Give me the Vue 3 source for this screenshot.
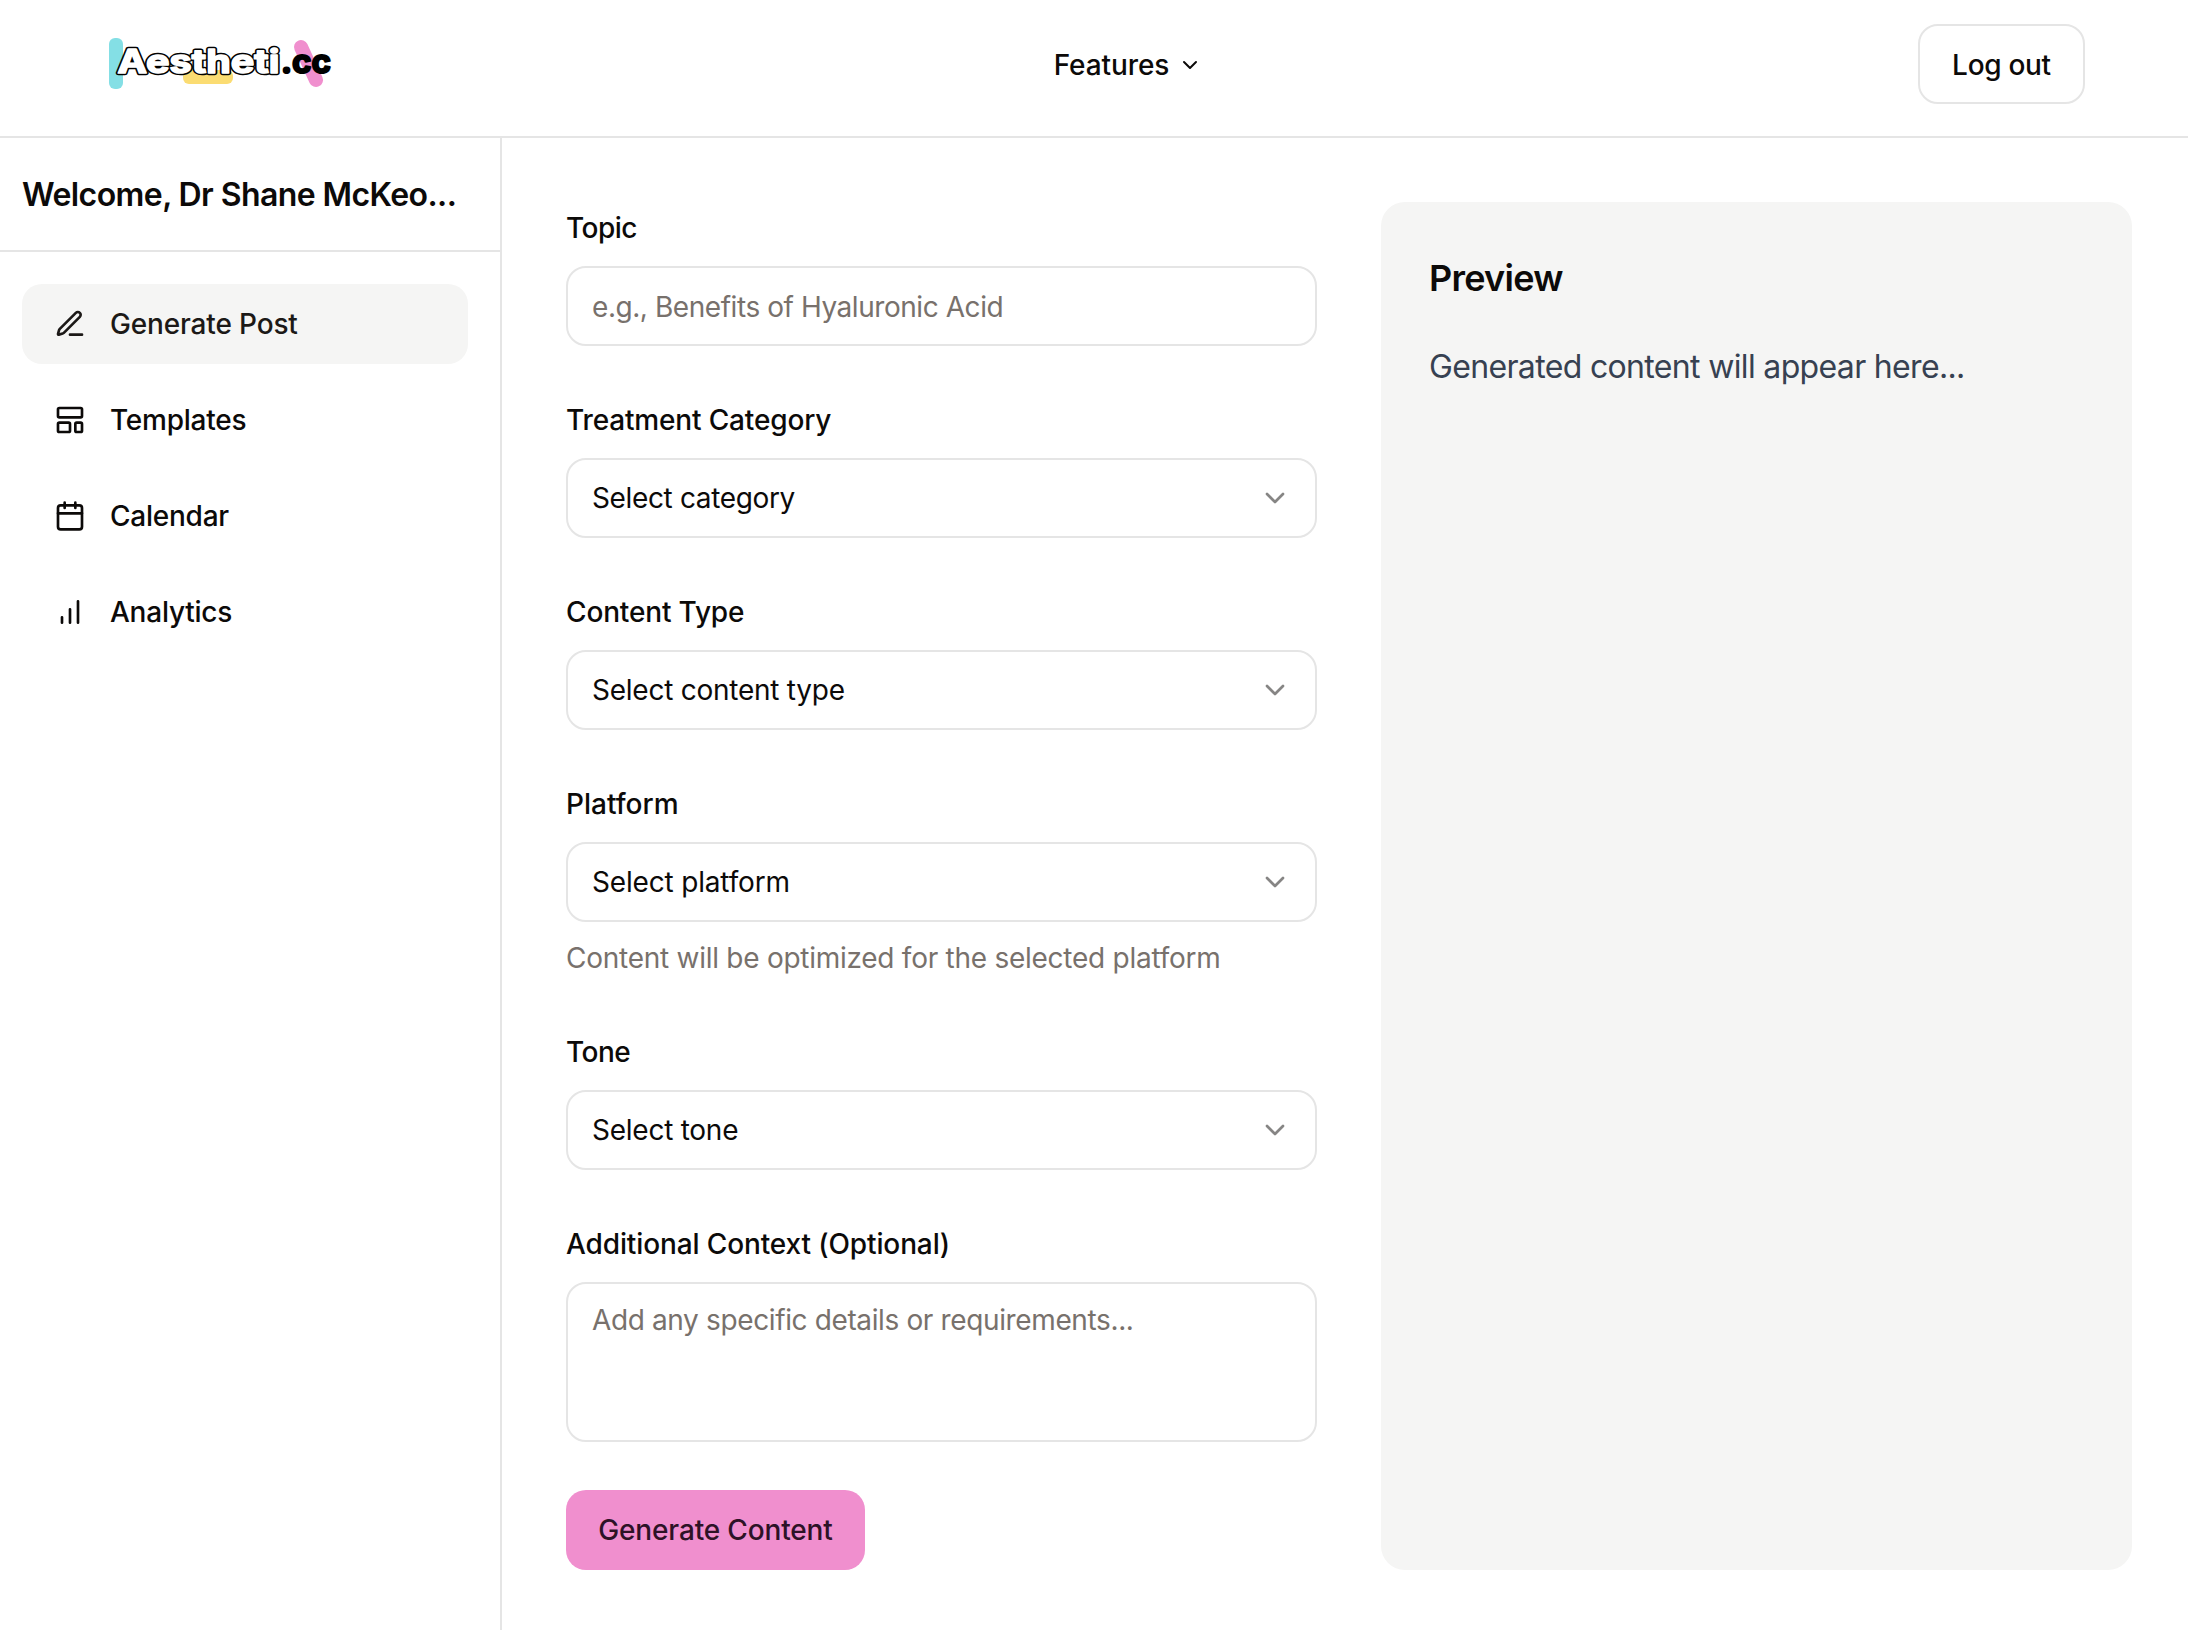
<script setup>
const nav = [
  { id: 'post', label: 'Generate Post', active: true },
  { id: 'templates', label: 'Templates' },
  { id: 'calendar', label: 'Calendar' },
  { id: 'analytics', label: 'Analytics' },
]
const fields = [
  { label: 'Treatment Category', value: 'Select category' },
  { label: 'Content Type', value: 'Select content type' },
  { label: 'Platform', value: 'Select platform', help: 'Content will be optimized for the selected platform' },
  { label: 'Tone', value: 'Select tone' },
]
</script>

<template>
  <div class="page">
    <header class="topbar">
      <svg class="logo" width="240" height="64" viewBox="0 0 240 64" aria-label="Aestheti.cc">
        <rect x="9" y="8" width="14" height="51" rx="6" fill="#84dfe5" />
        <rect x="83" y="40" width="50" height="14" rx="6" fill="#fbdc72" />
        <path d="M201 17L216 50" stroke="#f08fce" stroke-width="14" stroke-linecap="round" />
        <text class="word edge" x="17.5" y="43" textLength="162" lengthAdjust="spacingAndGlyphs">Aestheti</text>
        <text class="word face" x="17.5" y="43" textLength="162" lengthAdjust="spacingAndGlyphs">Aestheti</text>
        <text class="word dot" x="181" y="43" textLength="50" lengthAdjust="spacingAndGlyphs">.cc</text>
      </svg>
      <div class="features">
        <span>Features</span>
        <svg width="24" height="24" viewBox="0 0 24 24"><path d="m6 9 6 6 6-6" /></svg>
      </div>
      <button class="logout">Log out</button>
    </header>

    <div class="body">
      <aside class="sidebar">
        <h2 class="welcome"><span>Welcome, Dr Shane McKeo...</span></h2>
        <nav class="nav">
          <a v-for="n in nav" :key="n.id" class="item" :class="[n.id, { active: n.active }]">
            <svg width="32" height="32" viewBox="0 0 24 24">
              <template v-if="n.id === 'post'">
                <path d="M12 20h9" />
                <path d="M16.376 3.622a1 1 0 0 1 3.002 3.002L7.368 18.635a2 2 0 0 1-.855.506l-2.872.838a.5.5 0 0 1-.62-.62l.838-2.872a2 2 0 0 1 .506-.854z" />
              </template>
              <template v-else-if="n.id === 'templates'">
                <rect x="3" y="3" width="18" height="7" rx="1" />
                <rect x="3" y="14" width="9" height="7" rx="1" />
                <rect x="16" y="14" width="5" height="7" rx="1" />
              </template>
              <template v-else-if="n.id === 'calendar'">
                <rect x="3" y="4" width="18" height="18" rx="2" />
                <path d="M8 2v4M16 2v4M3 10h18" />
              </template>
              <path v-else d="M12 20V10M18 20V4M6 20v-4" />
            </svg>
            <span>{{ n.label }}</span>
          </a>
        </nav>
      </aside>

      <main class="main">
        <form class="form" @submit.prevent>
          <div class="field">
            <label class="l0">Topic</label>
            <div class="control muted"><span class="v0">e.g., Benefits of Hyaluronic Acid</span></div>
          </div>
          <div v-for="(f, i) in fields" :key="f.label" class="field">
            <label :class="'l' + (i + 1)">{{ f.label }}</label>
            <div class="control">
              <span :class="'v' + (i + 1)">{{ f.value }}</span>
              <svg width="32" height="32" viewBox="0 0 24 24"><path d="m6 9 6 6 6-6" /></svg>
            </div>
            <p v-if="f.help" class="help">{{ f.help }}</p>
          </div>
          <div class="field">
            <label class="l5">Additional Context (Optional)</label>
            <div class="control area muted"><span class="v5">Add any specific details or requirements...</span></div>
          </div>
          <button class="generate">Generate Content</button>
        </form>
        <section class="preview">
          <h3>Preview</h3>
          <p>Generated content will appear here...</p>
        </section>
      </main>
    </div>
  </div>
</template>

<style>
body { margin: 0; background: #fff; }
</style>

<style scoped>
* { box-sizing: border-box; }
.page { width: 2188px; height: 1630px; display: flex; flex-direction: column; overflow: hidden; font-family: Inter, "Liberation Sans", sans-serif; font-size: 28px; line-height: 40px; color: #0c0a09; white-space: nowrap; }
svg { fill: none; stroke: currentColor; stroke-width: 2; stroke-linecap: round; stroke-linejoin: round; flex: none; }
button { font: inherit; color: inherit; padding: 0; white-space: nowrap; }
.topbar { height: 138px; border-bottom: 2px solid #e5e5e5; display: flex; justify-content: space-between; align-items: flex-start; padding: 24px 103px 0 100px; flex: none; }
.logo { margin-top: 6px; stroke: none; }
.word { font-family: Inter, sans-serif; font-weight: 700; font-size: 32.5px; stroke-linejoin: round; font-variant-ligatures: none; }
.edge { fill: #000; stroke: #000; stroke-width: 4.4; }
.face { fill: #fff; stroke: #fff; stroke-width: 1.6; }
.dot { fill: #000; stroke: #000; stroke-width: 2; }
.features { display: flex; align-items: center; height: 80px; gap: 9px; font-weight: 500; letter-spacing: -0.1px; padding-top: 1px; margin-right: 2px; }
.features svg { margin-top: 1px; }
.logout { width: 167px; height: 80px; border: 2px solid #e5e5e5; border-radius: 20px; background: #fff; font-weight: 500; letter-spacing: -0.3px; padding-top: 1px; }
.body { flex: 1; display: flex; min-height: 0; }
.sidebar { width: 502px; border-right: 2px solid #e5e5e5; flex: none; }
.welcome { margin: 0; height: 114px; border-bottom: 2px solid #e5e5e5; padding: 0 22px; font-size: 32px; line-height: 114px; font-weight: 600; letter-spacing: -0.58px; }
.nav { padding: 32px 32px 0 22px; display: flex; flex-direction: column; gap: 16px; }
.item { height: 80px; border-radius: 20px; padding: 0 32px; display: flex; align-items: center; gap: 24px; font-weight: 500; letter-spacing: -0.24px; }
.item.active { background: #f5f5f4; color: #1c1917; letter-spacing: -0.16px; }
.main { flex: 1; padding: 64px 56px 60px 64px; display: grid; grid-template-columns: 1fr 1fr; gap: 64px; }
.form { display: flex; flex-direction: column; align-items: stretch; }
.field { display: flex; flex-direction: column; padding-top: 6px; margin-bottom: 48px; }
.field label { font-weight: 500; margin-bottom: 18px; letter-spacing: -0.16px; }
.field .l0, .field .l4 { letter-spacing: -0.55px; }
.field .l3 { letter-spacing: 0; }
.field .l5 { letter-spacing: -0.12px; }
.control { height: 80px; border: 2px solid #e5e5e5; border-radius: 20px; padding: 0 24px; display: flex; align-items: center; justify-content: space-between; letter-spacing: -0.25px; }
.control svg { color: #868584; }
.v0 { letter-spacing: -0.44px; padding-top: 2px; }
.v1 { letter-spacing: -0.36px; }
.v3 { letter-spacing: -0.17px; }
.v5 { letter-spacing: -0.37px; }
.muted, .help { color: #78716c; }
.help { margin: 16px 0 0; letter-spacing: -0.26px; }
.area { height: 160px; align-items: flex-start; padding-top: 16px; }
.generate { width: 299px; height: 80px; border: 0; border-radius: 20px; background: #f08fce; color: #2d1226; font-weight: 500; letter-spacing: -0.15px; }
.preview { background: #f5f5f4; border-radius: 24px; padding: 48px; }
.preview h3 { margin: 0; font-size: 36px; line-height: 56px; font-weight: 600; letter-spacing: -0.75px; }
.preview p { margin: 37px 0 0; font-size: 32px; line-height: 48px; color: #374151; letter-spacing: -0.66px; }
</style>
